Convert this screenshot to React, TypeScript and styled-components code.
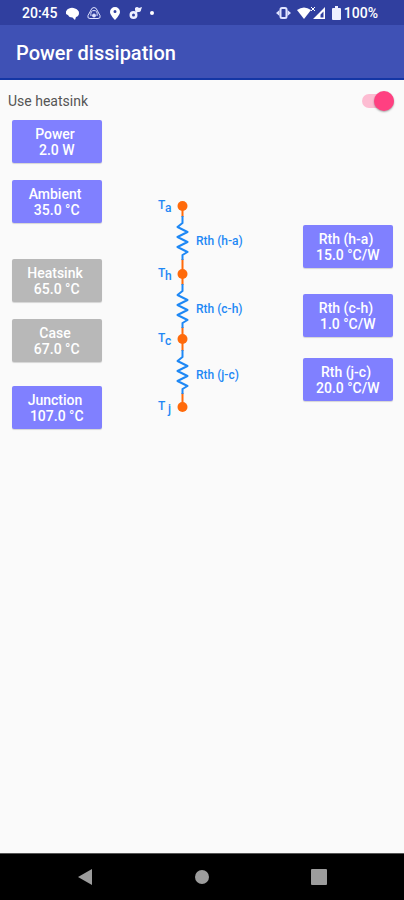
import React, { useState } from "react";
import styled, { createGlobalStyle } from "styled-components";

const GlobalStyle = createGlobalStyle`
  *, *::before, *::after { box-sizing: border-box; }
  body { margin: 0; background: #fafafa; font-family: Roboto, "Liberation Sans", sans-serif; }
`;

const Screen = styled.div`
  display: flex;
  flex-direction: column;
  min-height: 100vh;
`;

const StatusBar = styled.div`
  display: flex;
  align-items: center;
  justify-content: space-between;
  height: 25px;
  padding: 1px 26px 0 22px;
  background: #303f9f;
  color: #fff;
  font-size: 14px;
  font-weight: 500;
  line-height: 24px;
`;

const StatusGroup = styled.div<{ $gap: number }>`
  display: flex;
  align-items: center;
  gap: ${(p) => p.$gap}px;
  svg { display: block; }
`;

const AppBar = styled.header`
  display: flex;
  align-items: center;
  height: 55px;
  padding: 2px 16px 0;
  background: #3f51b5;
  border-bottom: 2px solid #1436a5;
  color: #fff;
`;

const Title = styled.h1`
  margin: 0;
  font-size: 20px;
  font-weight: 500;
  line-height: 24px;
`;

const Main = styled.main`
  flex: 1;
`;

const SwitchRow = styled.label`
  display: flex;
  align-items: center;
  justify-content: space-between;
  height: 40px;
  padding: 2px 10px 0 8px;
  color: #555;
  font-size: 14px;
`;

const Switch = styled.input`
  appearance: none;
  display: flex;
  align-items: center;
  width: 32px;
  height: 14px;
  margin: 0;
  background: #fdbcd2;
  border-radius: 7px;
  cursor: pointer;

  &::before {
    content: "";
    flex: none;
    width: 20px;
    height: 20px;
    border-radius: 50%;
    background: #fafafa;
    box-shadow: 0 1px 2px rgba(0, 0, 0, 0.35);
  }
  &:checked { justify-content: flex-end; }
  &:checked::before { background: #ff4081; }
`;

const Board = styled.div`
  display: grid;
  grid-template-columns: 90px 1fr 90px;
  padding: 0 11px 0 12px;
`;

const Column = styled.div<{ $top?: number }>`
  display: flex;
  flex-direction: column;
  padding-top: ${(p) => p.$top ?? 0}px;
`;

const ValueButton = styled.button<{ $muted?: boolean; $gap?: number }>`
  height: 43px;
  margin: ${(p) => p.$gap ?? 0}px 0 0;
  padding: 0 4px 0 0;
  border: 0;
  border-radius: 2px;
  background: ${(p) => (p.$muted ? "#b8b8b8" : "#8080ff")};
  box-shadow: 0 1px 1px rgba(0, 0, 0, 0.15);
  color: #fff;
  font: 500 14px/16px Roboto, "Liberation Sans", sans-serif;
  text-align: center;
  white-space: pre;
`;

const Diagram = styled.svg`
  display: block;
  width: 110px;
  height: 230px;
  margin: 76px 0 0 48px;
  fill: none;
  stroke-width: 2;
  text {
    fill: #1e88f5;
    font: 500 12px Roboto, "Liberation Sans", sans-serif;
    stroke: none;
  }
`;

const NavBar = styled.nav`
  display: grid;
  grid-template-columns: repeat(3, 117px);
  justify-content: center;
  align-items: center;
  height: 47px;
  background: #000;
  border-top: 1px solid #555;
`;

const NavButton = styled.button`
  display: flex;
  justify-content: center;
  padding: 0;
  border: 0;
  background: none;
  svg { display: block; fill: #9c9c9c; }
`;

type Reading = { label: string; value: string; muted?: boolean; gap?: number };

const temperatures: Reading[] = [
  { label: "Power", value: "2.0 W" },
  { label: "Ambient", value: "35.0 °C", gap: 17 },
  { label: "Heatsink", value: "65.0 °C", muted: true, gap: 36 },
  { label: "Case", value: "67.0 °C", muted: true, gap: 17 },
  { label: "Junction", value: "107.0 °C", gap: 24 },
];

const resistances: Reading[] = [
  { label: "Rth (h-a)", value: "15.0 °C/W" },
  { label: "Rth (c-h)", value: "1.0 °C/W", gap: 26 },
  { label: "Rth (j-c)", value: "20.0 °C/W", gap: 21 },
];

const nodes = [
  { y: 10, sub: "a" },
  { y: 78, sub: "h" },
  { y: 143, sub: "c" },
  { y: 211, sub: "j" },
];

const resistors = [
  { y: 45, label: "Rth (h-a)" },
  { y: 113, label: "Rth (c-h)" },
  { y: 179, label: "Rth (j-c)" },
];

const Readings = ({ items }: { items: Reading[] }) => (
  <>
    {items.map((r) => (
      <ValueButton key={r.label} type="button" $muted={r.muted} $gap={r.gap}>
        {`${r.label}\n ${r.value}`}
      </ValueButton>
    ))}
  </>
);

const ThermalDiagram = () => (
  <Diagram viewBox="0 0 110 230" role="img" aria-label="Thermal resistance chain">
    <path d="M32.500 10V211" stroke="#ff6a0a" />
    {resistors.map(({ y, label }) => (
      <g key={label}>
        <path d={`M32 ${y - 24}V${y + 18}`} stroke="#fafafa" strokeWidth="4" />
        <path
          d={`M32.500 ${y - 25}v7l-5 4 10 5-10 5 10 5-10 5 10 5-5 3v5`}
          stroke="#1e88f5"
          strokeLinejoin="round"
        />
        <text x="46" y={y + 4}>{label}</text>
      </g>
    ))}
    {nodes.map(({ y, sub }) => (
      <g key={sub}>
        <circle cx="32.500" cy={y} r="5" fill="#ff6a0a" />
        <text x="8" y={y + 3}>T</text>
        <text x={sub === "j" ? 18 : 15} y={y + 6}>{sub}</text>
      </g>
    ))}
  </Diagram>
);

export default function App() {
  const [heatsink, setHeatsink] = useState(true);
  return (
    <Screen>
      <GlobalStyle />
      <StatusBar>
        <StatusGroup $gap={8}>
          <span>20:45</span>
          <svg width="13" height="13" viewBox="0 0 13 13" fill="#fff">
            <path d="M3 1.500Q6 0 9 1.500Q13 3 13 6Q13 9 10 10L9 13L6.500 10.500Q3 10.500 2 8Q-1 7 0 4.500Q1 2 3 1.500Z" />
          </svg>
          <svg width="14" height="14" viewBox="0 0 14 14" fill="none" stroke="#dfe3ff">
            <path d="M7 1.500Q4.500 1.500 3.500 5L1 9.500Q0 12.500 3 12.500H11Q14 12.500 13 9.500L10.500 5Q9.500 1.500 7 1.500Z" />
            <path d="M4 10Q3 4.500 7 4.500T10 10" />
            <circle cx="7" cy="9.500" r="1.500" fill="#dfe3ff" />
          </svg>
          <svg width="12" height="14" viewBox="0 0 12 14" fill="#fff">
            <path fillRule="evenodd" d="M6 1a5 5 0 0 0-5 5c0 3 5 8 5 8s5-5 5-8a5 5 0 0 0-5-5zm0 3a1.500 1.500 0 1 1 0 3 1.500 1.500 0 0 1 0-3z" />
          </svg>
          <svg width="13" height="14" viewBox="0 0 13 14" fill="#eef0ff">
            <path fillRule="evenodd" d="M4.500 5a4 4 0 1 0 0 8 4 4 0 0 0 0-8zm0 2.500a1.500 1.500 0 1 1 0 3 1.500 1.500 0 0 1 0-3z" />
            <path d="M6 2Q8 0 10 2L13 1L12 4Q12 6 9 6L7 7L6 4Z" />
          </svg>
          <svg width="4" height="4" viewBox="0 0 4 4" fill="#fff"><circle cx="2" cy="2" r="2" /></svg>
        </StatusGroup>
        <StatusGroup $gap={6}>
          <svg width="15" height="12" viewBox="0 0 15 12">
            <rect x="4.500" y="1" width="6" height="10" rx="1.500" fill="none" stroke="#dfe3ff" strokeWidth="2" />
            <path d="M3.500 3L0 6l3.500 3zM11.500 3L15 6l-3.500 3z" fill="#dfe3ff" />
          </svg>
          <svg width="29" height="14" viewBox="0 0 29 14" fill="#fff">
            <path d="M0 4Q7-1 14 4L7 13Z" />
            <path d="M14 1l4 4M18 1l-4 4" stroke="#fff" />
            <path fillRule="evenodd" d="M28 1V13H16ZM26.500 5.500L23.500 8.500V11.500H26.500Z" />
          </svg>
          <StatusGroup $gap={3}>
            <svg width="9" height="14" viewBox="0 0 9 14" fill="#eef0ff"><path d="M3 0h3v2h2q1 0 1 1v10q0 1-1 1H1q-1 0-1-1V3q0-1 1-1h2z" /></svg>
            <span>100%</span>
          </StatusGroup>
        </StatusGroup>
      </StatusBar>
      <AppBar><Title>Power dissipation</Title></AppBar>
      <Main>
        <SwitchRow>
          Use heatsink
          <Switch type="checkbox" role="switch" checked={heatsink} onChange={(e) => setHeatsink(e.target.checked)} />
        </SwitchRow>
        <Board>
          <Column><Readings items={temperatures} /></Column>
          <ThermalDiagram />
          <Column $top={105}><Readings items={resistances} /></Column>
        </Board>
      </Main>
      <NavBar>
        <NavButton type="button" aria-label="Back">
          <svg width="16" height="18" viewBox="0 0 16 18"><path d="M15 1v16L1 9z" /></svg>
        </NavButton>
        <NavButton type="button" aria-label="Home">
          <svg width="16" height="16" viewBox="0 0 16 16"><circle cx="8" cy="8" r="7" /></svg>
        </NavButton>
        <NavButton type="button" aria-label="Recent apps">
          <svg width="16" height="16" viewBox="0 0 16 16"><rect width="16" height="16" rx="1" /></svg>
        </NavButton>
      </NavBar>
    </Screen>
  );
}
